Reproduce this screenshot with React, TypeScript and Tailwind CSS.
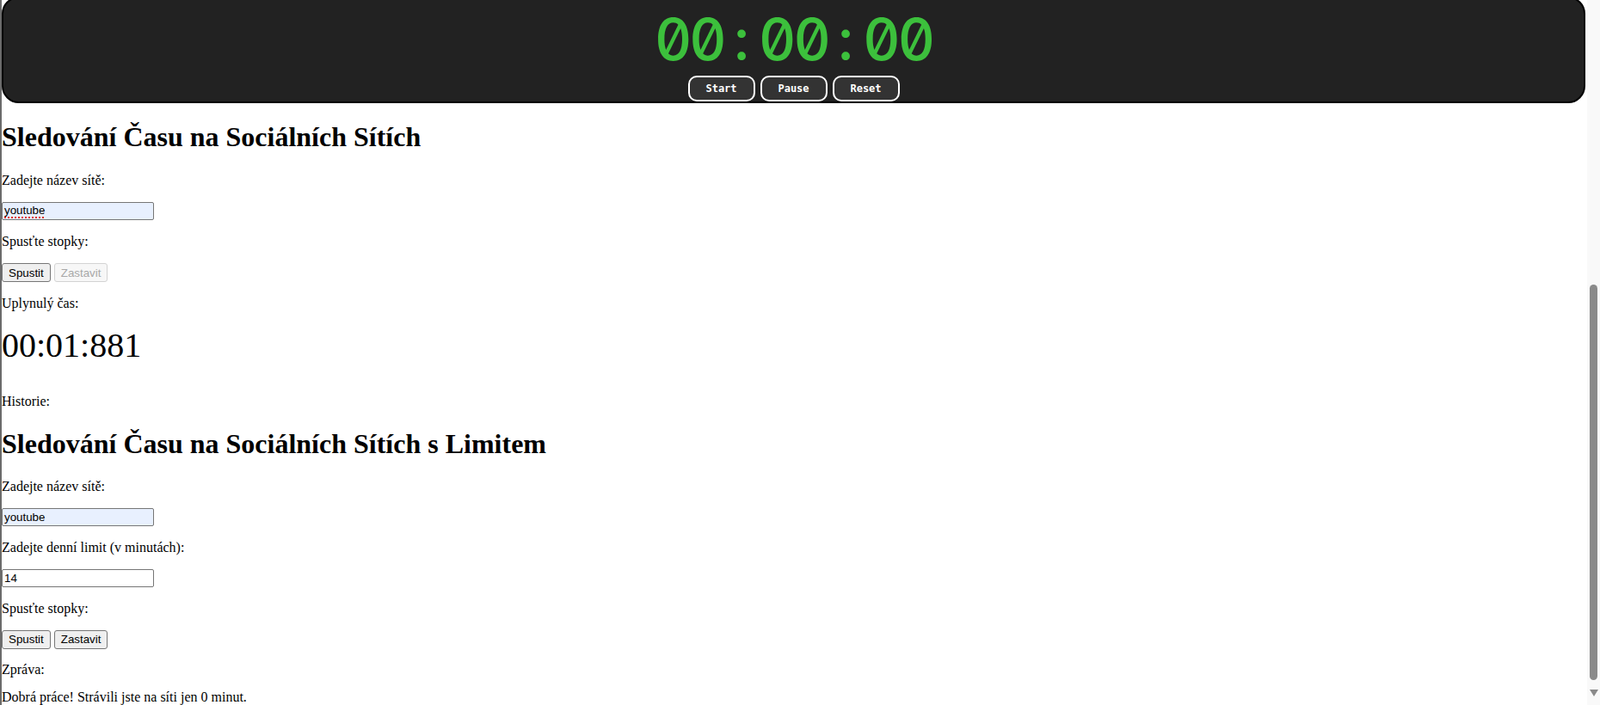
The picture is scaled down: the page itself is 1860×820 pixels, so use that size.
import React from "react";

const fieldBase =
  "w-[177px] h-[21px] border border-[#767676] rounded-[2px] px-[2px] py-[1px] font-['Liberation_Sans',Arial,sans-serif] text-[13.33px] text-black align-baseline";

const btnBase =
  "h-[22px] px-[7px] border rounded-[3px] font-['Liberation_Sans',Arial,sans-serif] text-[13.33px] align-baseline";

const NativeButton = ({ label, disabled }: { label: string; disabled?: boolean }) => (
  <button
    disabled={disabled}
    className={
      disabled
        ? `${btnBase} border-[#d3d3d3] bg-[#f7f7f7] text-[#a8a8a8]`
        : `${btnBase} border-[#767676] bg-[#efefef] text-black`
    }
  >
    {label}
  </button>
);

// pole s podtrženou chybou pravopisu (input sám podtržení nevykreslí)
const SpellField = ({ value }: { value: string }) => (
  <div className={`${fieldBase} inline-block bg-[#e8f0fe] leading-[normal] whitespace-nowrap`}>
    <span className="underline decoration-dotted decoration-[#e0302a] decoration-2 underline-offset-[3px]">{value}</span>
  </div>
);

const StopwatchBar = () => {
  const time = "00:00:00";
  return (
    <div className="-mt-[4px] mr-[2px] pt-[9px] bg-[#222222] border-2 border-black rounded-[20px]">
      <div className="text-center font-['Inter',sans-serif] font-medium slashed-zero tabular-nums text-[67px] leading-[78px] text-[#3cc03c]">
        {time.split("").map((c, i) => (
          <span key={i} className="inline-block w-[40.4px] text-center">
            {c}
          </span>
        ))}
      </div>
      <div className="mt-[3px] flex justify-center gap-[6px]">
        {["Start", "Pause", "Reset"].map((t) => (
          <button
            key={t}
            className="w-[78px] h-[30px] rounded-[10px] border-2 border-white bg-[#333333] text-white font-['DejaVu_Sans_Mono',monospace] text-[12px] font-bold"
          >
            {t}
          </button>
        ))}
      </div>
    </div>
  );
};

const Scrollbar = () => (
  <div className="w-[15px] shrink-0 bg-[#f9f9f9] flex flex-col items-center">
    <div className="h-[331px]" />
    <div className="w-[9px] h-[460px] rounded-full bg-[#8a8a8a]" />
    <div className="mt-[11px] w-0 h-0 border-l-[5px] border-r-[5px] border-t-[8px] border-l-transparent border-r-transparent border-t-[#8a8a8a]" />
  </div>
);

export default function App() {
  return (
    <div className="flex h-[820px] overflow-hidden bg-white">
      <div className="w-[2px] shrink-0 bg-[#6b6b6b]" />
      <div className="flex-1 min-w-0 font-['Liberation_Serif','Times_New_Roman',serif] text-[16px] leading-[normal] text-black">
        <StopwatchBar />

        {/* sledování bez limitu */}
        <h1 className="text-[32px] font-bold mt-[21.44px] mb-[23px]">Sledování Času na Sociálních Sítích</h1>
        <p className="my-4">Zadejte název sítě:</p>
        <div>
          <SpellField value="youtube" />
        </div>
        <p className="my-4">Spusťte stopky:</p>
        <div>
          <NativeButton label="Spustit" /> <NativeButton label="Zastavit" disabled />
        </div>
        <p className="my-4">Uplynulý čas:</p>
        <div className="mt-4 mb-[33px] text-[40px]">00:01:881</div>
        <p className="my-4">Historie:</p>

        {/* sledování s limitem */}
        <h1 className="text-[32px] font-bold mt-[22px] mb-[21.44px]">Sledování Času na Sociálních Sítích s Limitem</h1>
        <p className="my-4">Zadejte název sítě:</p>
        <div>
          <input readOnly value="youtube" className={`${fieldBase} bg-[#e8f0fe]`} />
        </div>
        <p className="my-4">Zadejte denní limit (v minutách):</p>
        <div>
          <input readOnly value="14" className={`${fieldBase} bg-white`} />
        </div>
        <p className="my-4">Spusťte stopky:</p>
        <div>
          <NativeButton label="Spustit" /> <NativeButton label="Zastavit" />
        </div>
        <p className="mt-[15px] mb-[14px]">Zpráva:</p>
        <p className="mt-[14px]">Dobrá práce! Strávili jste na síti jen 0 minut.</p>
      </div>
      <Scrollbar />
    </div>
  );
}
